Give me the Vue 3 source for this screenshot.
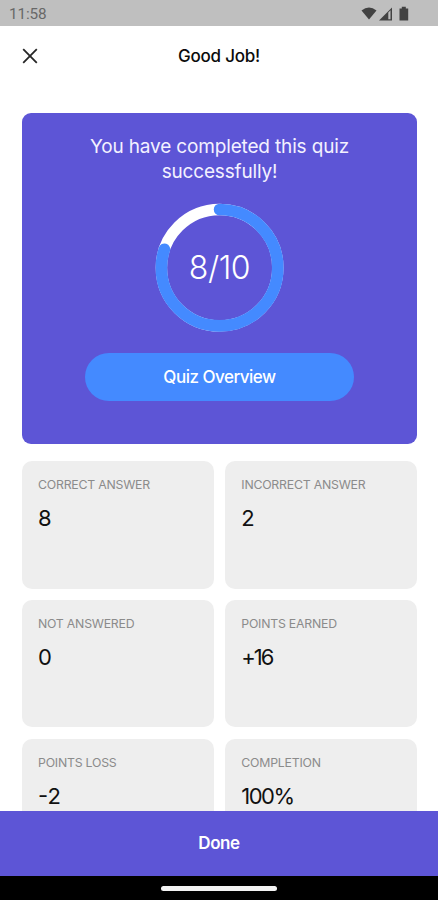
<script setup>
const score = { correct: 8, total: 10 }
const radius = 58.2
const circumference = 2 * Math.PI * radius
const progress = `${(circumference * score.correct) / score.total} ${circumference}`

const stats = [
  { label: 'CORRECT ANSWER', value: '8', key: 'correct' },
  { label: 'INCORRECT ANSWER', value: '2', key: 'incorrect' },
  { label: 'NOT ANSWERED', value: '0', key: 'skipped' },
  { label: 'POINTS EARNED', value: '+16', key: 'earned' },
  { label: 'POINTS LOSS', value: '-2', key: 'loss' },
  { label: 'COMPLETION', value: '100%', key: 'completion' },
]
</script>

<template>
  <div class="screen">
    <div class="status">
      <span class="clock">11:58</span>
      <svg class="status-icons" width="50" height="16" viewBox="0 0 50 16">
        <path d="M.5 4.6Q8 -1.6 15.500 4.600L8 13.500Z" fill="#424242" />
        <path d="M31 1.500V14.500H18Z" fill="#424242" />
        <path d="M27.300 6.500L29.500 4.300V13.300H27.300Z" fill="#bdbdbd" />
        <path d="M38.500 2.500h2.300V.8h4v1.700H47.200V14.500H38.500Z" fill="#424242" />
      </svg>
    </div>

    <header class="topbar">
      <button class="close" aria-label="Close">
        <svg width="16" height="16" viewBox="0 0 16 16">
          <path d="M1.200 1.200L14.800 14.800M14.800 1.200L1.200 14.800" stroke="#262626" stroke-width="1.800" />
        </svg>
      </button>
      <h1>Good Job!</h1>
    </header>

    <main class="content">
      <section class="hero">
        <p class="message">You have completed this quiz<br />successfully!</p>
        <div class="ring">
          <svg width="130" height="130" viewBox="0 0 130 130">
            <circle cx="64.600" cy="64.700" :r="radius" fill="none" stroke="#fff" stroke-width="11.400" />
            <circle cx="64.600" cy="64.700" :r="radius" fill="none" stroke="#448aff" stroke-width="11.700"
              stroke-linecap="round" :stroke-dasharray="progress" transform="rotate(-90 64.600 64.700)" />
          </svg>
          <span class="score">{{ score.correct }}/{{ score.total }}</span>
        </div>
        <button class="overview">Quiz Overview</button>
      </section>

      <section class="stats">
        <article v-for="stat in stats" :key="stat.key" class="stat">
          <span class="label">{{ stat.label }}</span>
          <span class="value" :class="stat.key">{{ stat.value }}</span>
        </article>
      </section>
    </main>

    <button class="done">Done</button>
    <div class="navbar"><span class="handle"></span></div>
  </div>
</template>

<style>
body {
  margin: 0;
}
</style>

<style scoped>
.screen {
  width: 438px;
  height: 900px;
  display: flex;
  flex-direction: column;
  overflow: hidden;
  background: #fff;
  font-family: Inter, "Liberation Sans", sans-serif;
}

button {
  border: 0;
  padding: 0;
  font-family: inherit;
}

.status {
  flex: none;
  height: 26px;
  box-sizing: border-box;
  padding: 2px 27px 0 9px;
  display: flex;
  align-items: center;
  justify-content: space-between;
  background: #bfbfbf;
}

.clock {
  font-family: Roboto, sans-serif;
  font-size: 15.300px;
  line-height: 24px;
  letter-spacing: -0.150px;
  color: #686868;
}

.status-icons {
  display: block;
  margin-top: -1px;
}

.topbar {
  flex: none;
  height: 60px;
  display: grid;
  grid-template-columns: 60px 1fr 60px;
  align-items: center;
}

.close {
  display: flex;
  width: 16px;
  margin-left: 22px;
  background: none;
}

.close svg {
  display: block;
}

h1 {
  margin: 0;
  text-align: center;
  font-size: 17px;
  line-height: 24px;
  font-weight: 500;
  letter-spacing: -0.250px;
  color: #0b0b0b;
}

.content {
  flex: 1;
  min-height: 0;
  overflow: hidden;
  padding: 26.500px 21px 0 22px;
}

.hero {
  height: 331.500px;
  box-sizing: border-box;
  padding-top: 22.500px;
  display: flex;
  flex-direction: column;
  align-items: center;
  border-radius: 9px;
  background: #5d55d6;
}

.message {
  margin: 0;
  text-align: center;
  font-size: 19px;
  line-height: 24.500px;
  letter-spacing: -0.160px;
  color: #f3f1ff;
}

.ring {
  display: grid;
  place-items: center;
  margin-top: 18.500px;
}

.ring svg,
.score {
  grid-area: 1 / 1;
  display: block;
}

.score {
  font-size: 32px;
  line-height: 40px;
  font-weight: 300;
  letter-spacing: -0.400px;
  color: #fff;
}

.overview {
  width: 269px;
  height: 48.500px;
  margin-top: 20px;
  padding-top: 1px;
  border-radius: 24px;
  background: #448aff;
  color: #fff;
  font-size: 17px;
  font-weight: 500;
  letter-spacing: -0.500px;
}

.stats {
  display: grid;
  grid-template-columns: 192px 192px;
  grid-auto-rows: 127.500px;
  gap: 11.300px;
  margin-top: 17px;
}

.stat {
  box-sizing: border-box;
  padding: 15px 16px;
  display: flex;
  flex-direction: column;
  align-items: flex-start;
  border-radius: 10px;
  background: #eee;
}

.label {
  font-size: 12.300px;
  line-height: 18px;
  white-space: nowrap;
  letter-spacing: -0.220px;
  color: #8b8b8b;
}

.value {
  margin-top: 10px;
  font-size: 22px;
  line-height: 28px;
  color: #111;
}

.value.earned {
  letter-spacing: -2px;
}

.value.completion {
  letter-spacing: -1.500px;
}

.done {
  flex: none;
  height: 65px;
  padding-bottom: 1px;
  background: #5d55d6;
  color: #fff;
  font-size: 17px;
  font-weight: 600;
  letter-spacing: -0.400px;
}

.navbar {
  flex: none;
  height: 24px;
  display: flex;
  justify-content: center;
  align-items: center;
  background: #000;
}

.handle {
  width: 116px;
  height: 5px;
  border-radius: 2.500px;
  background: #f3f3f3;
}
</style>
